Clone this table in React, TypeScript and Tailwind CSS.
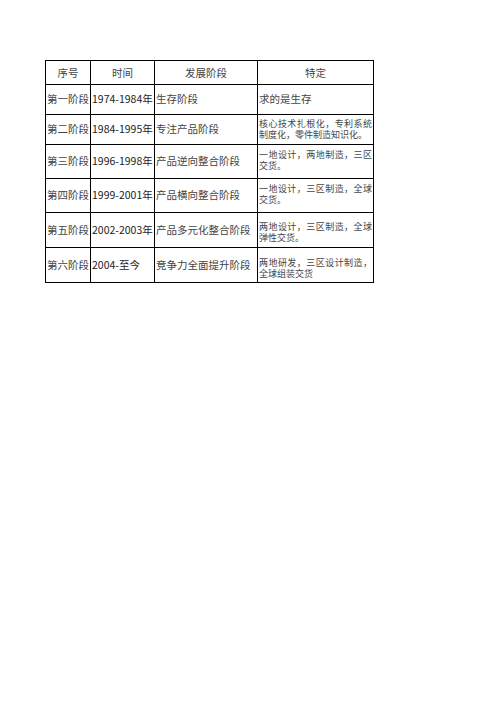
import React from 'react';

const rows = [
  { no: '第一阶段', time: '1974-1984年', stage: '生存阶段', desc: '求的是生存', small: false, pt: 'pt-0' },
  { no: '第二阶段', time: '1984-1995年', stage: '专注产品阶段', desc: '核心技术扎根化，专利系统制度化，零件制造知识化。', small: true, pt: 'pt-[4px]' },
  { no: '第三阶段', time: '1996-1998年', stage: '产品逆向整合阶段', desc: '一地设计，两地制造，三区交货。', small: true, pt: 'pt-[5px]' },
  { no: '第四阶段', time: '1999-2001年', stage: '产品横向整合阶段', desc: '一地设计，三区制造，全球交货。', small: true, pt: 'pt-[5px]' },
  { no: '第五阶段', time: '2002-2003年', stage: '产品多元化整合阶段', desc: '两地设计，三区制造，全球弹性交货。', small: true, pt: 'pt-[9px]' },
  { no: '第六阶段', time: '2004-至今', stage: '竞争力全面提升阶段', desc: '两地研发，三区设计制造，全球组装交货', small: true, pt: 'pt-[10px]' },
];

const font = "font-['Noto_Sans_CJK_SC','Noto_Sans',sans-serif]";

export default function App() {
  return (
    <div className={`w-[496px] h-[702px] bg-white ${font} text-[#444]`}>
      <div className="pt-[60px] pl-[45px]">
        <div className="grid w-[329px] grid-cols-[44px_63px_102px_115px] grid-rows-[23px_29px_29px_33px_33px_34px_34px] gap-px bg-black p-px">
          {['序号', '时间', '发展阶段', '特定'].map((h) => (
            <div key={h} className="bg-white flex items-center justify-center text-[10.5px] leading-none pt-[2px]">
              {h}
            </div>
          ))}
          {rows.map((r) => (
            <React.Fragment key={r.no}>
              <div className="bg-white flex items-center pl-px text-[10.5px] leading-none whitespace-nowrap">{r.no}</div>
              <div className="bg-white flex items-center pl-px text-[10.5px] leading-none whitespace-nowrap text-[#222]">{r.time}</div>
              <div className="bg-white flex items-center pl-px text-[10.5px] leading-none whitespace-nowrap">{r.stage}</div>
              {r.small ? (
                <div className={`bg-white pl-px pr-px ${r.pt} text-[9px] leading-[10.5px] text-justify`}>{r.desc}</div>
              ) : (
                <div className="bg-white flex items-center pl-px text-[10.5px] leading-none">{r.desc}</div>
              )}
            </React.Fragment>
          ))}
        </div>
      </div>
    </div>
  );
}
